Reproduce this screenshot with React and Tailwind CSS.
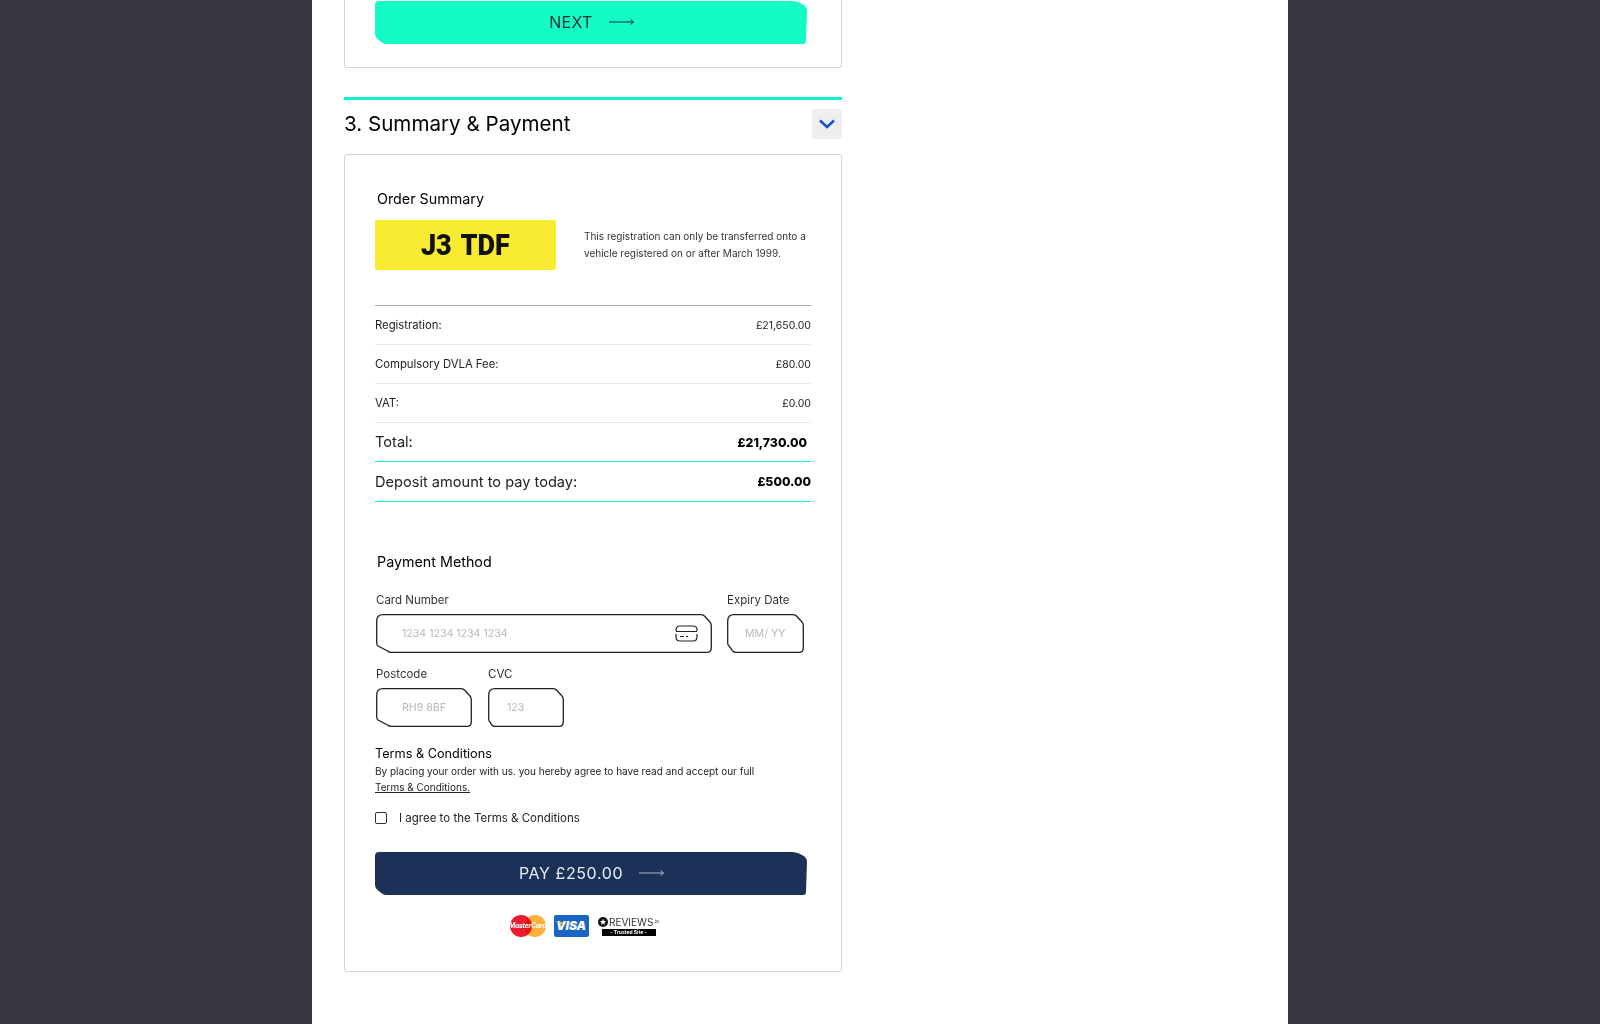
import { useState } from 'react';

const font = { fontFamily: 'Inter, "Liberation Sans", sans-serif' };

function Arrow({ color }) {
  return (
    <svg width="25" height="8" viewBox="0 0 25 8" fill="none" stroke={color} strokeWidth="1">
      <path d="M0 4H24.5M21.5 1.5L24.5 4L21.5 6.5" />
    </svg>
  );
}

function ChamferButton({ bg, color, arrow, tracking, children }) {
  return (
    <button
      type="button"
      className={`flex h-[43px] w-[432px] items-center justify-center gap-[16px] pb-px pl-px text-[16px] [clip-path:path('M4,0H417Q421,0,424,1.5L428,3.5Q432,5.5,432,10L431,40Q431,43,428,43H12Q9,43,7,41.5L3,38.5Q0,36,0,33V4Q0,0,4,0Z')] ${bg} ${color} ${tracking}`}
    >
      <span>{children}</span>
      <Arrow color={arrow} />
    </button>
  );
}

// contorno de los inputs con esquinas cortadas
function Field({ label, placeholder, w, cut = 14, pl = 'pl-[26px]', className = '', children }) {
  const h = 39;
  const r = w - 0.7;
  const b = h - 0.7;
  const v = cut > 8 ? 8 : cut;
  const path = `M7 .7H${w - 11}Q${w - 8.5} .7 ${w - 7} 2.5L${w - 2} 8Q${r} 9.5 ${r} 12V${h - 5}Q${r} ${b} ${w - 5} ${b}H${cut + 1}Q${cut - 1} ${b} ${cut - 2} ${b - 1}L2 ${h - v + 1}Q.7 ${h - v} .7 ${h - v - 2}V7Q.7 .7 7 .7Z`;
  return (
    <div className={`shrink-0 ${className}`} style={{ width: w }}>
      <label className="mb-[7px] block text-[11.5px] leading-[14px] text-[#333]">{label}</label>
      <div className="relative h-[39px]">
        <svg className="absolute inset-0" width={w} height={h} fill="none" stroke="#222" strokeWidth="1.3">
          <path d={path} />
        </svg>
        <input
          placeholder={placeholder}
          className={`relative h-full w-full bg-transparent text-[10.6px] outline-none placeholder:text-[#b8b8b8] ${pl}`}
        />
        {children}
      </div>
    </div>
  );
}

function Row({ label, value }) {
  return (
    <div className="flex h-[39px] items-center justify-between border-b border-[#e8e8e8] pt-px text-[11.3px] text-[#222]">
      <span>{label}</span>
      <span className="text-[10.5px]">{value}</span>
    </div>
  );
}

function BigRow({ label, value, pr = '', h = 'h-[39px]' }) {
  return (
    <div className={`flex items-center justify-between border-b border-[#10efd0] pt-[2px] text-[14.6px] text-[#222] ${h}`}>
      <span>{label}</span>
      <span className={`text-[12.3px] font-extrabold text-black ${pr}`}>{value}</span>
    </div>
  );
}

function CardIcon() {
  return (
    <svg width="23" height="17" viewBox="0 0 23 17" fill="none" stroke="#222" strokeWidth="1.2" className="absolute right-[14px] top-[11px]">
      <path d="M1 6V5Q1 1 5 1H18Q22 1 22 5V6M1 9V12Q1 16 5 16H18Q22 16 22 12V9M1 6.5H22M5 11.5H9M11 11.5H13" />
    </svg>
  );
}

function Logos() {
  return (
    <div className="mt-[20px] flex items-start justify-center gap-[8px] pr-[17px]">
      <div className="relative h-[22px] w-[36px]">
        <div className="absolute left-0 top-0 h-[22px] w-[22px] rounded-full bg-[#ec1c2e]" />
        <div className="absolute right-0 top-0 h-[22px] w-[22px] rounded-full bg-[#fbb03b] mix-blend-multiply" />
        <span className="absolute inset-0 flex items-center justify-center text-[7px] font-bold italic tracking-tighter text-white">MasterCard</span>
      </div>
      <div className="relative flex h-[22px] w-[35px] items-center justify-center rounded-[2px] bg-[#1a65c2] text-[12px] font-black italic leading-none text-white">
        VISA
        <svg className="absolute left-[2px] top-[7px]" width="8" height="5" viewBox="0 0 8 5">
          <path d="M0 0H6L8 5Q5 1 0 0Z" fill="#f0b53c" />
        </svg>
      </div>
      <div className="ml-[1px] flex w-[62px] flex-col items-center">
        <div className="flex h-[13px] items-center text-[10px] leading-none text-[#333]">
          <svg width="10" height="10" viewBox="0 0 10 10" className="mr-px">
            <circle cx="5" cy="5" r="5" fill="#111" />
            <path d="M5 1.8L5.9 4H8.2L6.4 5.4L7 7.7L5 6.4L3 7.7L3.6 5.4L1.8 4H4.1Z" fill="#fff" />
          </svg>
          REVIEWS<span className="text-[5px]">.io</span>
        </div>
        <div className="mt-[1px] flex h-[7px] w-[54px] items-center justify-center bg-black text-[5px] font-bold leading-none text-white">- Trusted Site -</div>
      </div>
    </div>
  );
}

export default function App() {
  const [agree, setAgree] = useState(false);

  return (
    <div className="flex h-[1024px] justify-center overflow-hidden bg-[#383842] text-black" style={font}>
      <div className="w-[976px] bg-white pl-[32px]">
        <div className="w-[498px]">
          <div className="rounded-b-[3px] border border-t-0 border-[#d5d5d5] pb-[23px] pl-[30px] pt-px">
            <ChamferButton bg="bg-[#15fbc6]" color="text-[#11302c]" arrow="#11302c" tracking="tracking-[0.3px]">NEXT</ChamferButton>
          </div>

          <div className="mt-[29px] border-t-[3px] border-[#10efd0]">
            <div className="flex h-[54px] items-start justify-between">
              <h2 className="mt-[10px] text-[20.6px] font-normal leading-[28px] text-black">3. Summary &amp; Payment</h2>
              <div className="mt-[9px] flex h-[30px] w-[30px] items-center justify-center bg-[#eeeeee]">
                <svg width="16" height="10" viewBox="0 0 16 10" fill="none" stroke="#0b55c8" strokeWidth="2.4">
                  <path d="M1 1.5L8 8L15 1.5" />
                </svg>
              </div>
            </div>
          </div>

          <div className="h-[818px] rounded-[3px] border border-[#d5d5d5] px-[30px] pt-[35px]">
            <h3 className="pl-[2px] text-[14.3px] font-normal leading-[18px]">Order Summary</h3>

            <div className="mt-[12px] flex items-center">
              <div
                className="flex h-[50px] w-[181px] shrink-0 items-center justify-center rounded-[2px] bg-[#f7ec31] text-[30px] font-black leading-none text-[#111]"
                style={{ fontFamily: 'Roboto, sans-serif' }}
              >
                <span className="inline-block scale-x-90 [word-spacing:3px]">J3 TDF</span>
              </div>
              <p className="ml-[28px] w-[236px] text-[10px] leading-[17.5px] text-[#333]">
                This registration can only be transferred onto a vehicle registered on or after March 1999.
              </p>
            </div>

            <div className="mt-[35px] w-[436px] border-t border-[#a8a8a8]">
              <Row label="Registration:" value="£21,650.00" />
              <Row label="Compulsory DVLA Fee:" value="£80.00" />
              <Row label="VAT:" value="£0.00" />
              <BigRow label="Total:" value="£21,730.00" pr="pr-[4px]" />
              <BigRow label="Deposit amount to pay today:" value="£500.00" h="h-[40px]" />
            </div>

            <h3 className="mt-[51px] pl-[2px] text-[14.3px] font-normal leading-[18px]">Payment Method</h3>

            <div className="mt-[22px] flex pl-px">
              <Field label="Card Number" placeholder="1234 1234 1234 1234" w={336}>
                <CardIcon />
              </Field>
              <Field label="Expiry Date" placeholder="MM/ YY" w={77} cut={8} pl="pl-[18px]" className="ml-[15px]" />
            </div>

            <div className="mt-[14px] flex pl-px">
              <Field label="Postcode" placeholder="RH9 8BF" w={96} />
              <Field label="CVC" placeholder="123" w={76} cut={6} pl="pl-[19px]" className="ml-[16px]" />
            </div>

            <h4 className="mt-[19px] text-[12.7px] font-normal leading-[16px]">Terms &amp; Conditions</h4>
            <p className="mt-[2px] text-[10px] leading-[15.5px] text-[#222]">
              By placing your order with us. you hereby agree to have read and accept our full
              <br />
              <a href="#terms" className="underline">Terms &amp; Conditions.</a>
            </p>

            <label className="mt-[15px] flex items-center text-[11.5px] leading-[16px] text-[#222]">
              <input
                type="checkbox"
                checked={agree}
                onChange={(e) => setAgree(e.target.checked)}
                className="h-[12px] w-[12px] appearance-none rounded-[2px] border border-[#333]"
              />
              <span className="ml-[12px]">I agree to the Terms &amp; Conditions</span>
            </label>

            <div className="mt-[26px]">
              <ChamferButton bg="bg-[#1c3158]" color="text-[#e8ecf4]" arrow="#aab4c8" tracking="tracking-[0.6px]">PAY £250.00</ChamferButton>
            </div>

            <Logos />
          </div>
        </div>
      </div>
    </div>
  );
}
